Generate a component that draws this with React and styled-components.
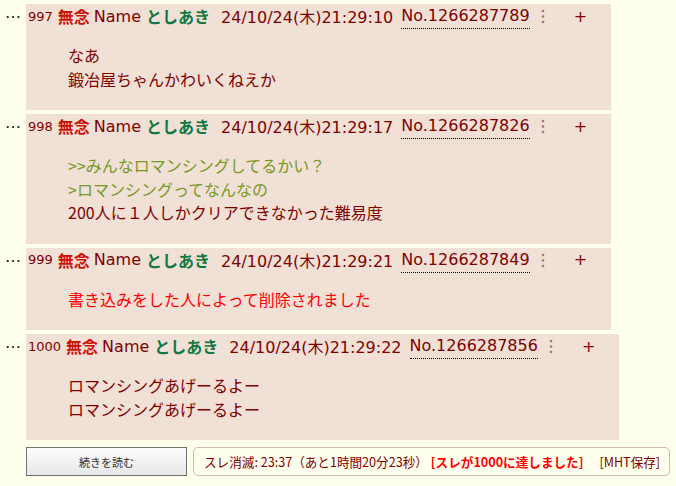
import styled, { createGlobalStyle } from 'styled-components'

const GlobalStyle = createGlobalStyle`
    body {
        margin: 0;
        background: #ffffee;
    }
`

const Page = styled.div`
    display: flex;
    flex-direction: column;
    padding-top: 4px;
    color: #800000;
    font-family: "DejaVu Sans", "Noto Sans CJK JP", sans-serif;
`

const Thread = styled.div`
    display: flex;
    flex-direction: column;
    gap: 4px;
`

const Row = styled.div`
    display: flex;
    align-items: flex-start;
`

const Dots = styled.div`
    width: 26px;
    box-sizing: border-box;
    padding-left: 5px;
    line-height: 24px;
    font-size: 16px;
    font-family: "Noto Sans CJK JP", sans-serif;
    color: #222;
`

const Reply = styled.div`
    background: #f0e0d6;
    padding: 0 24px 3px 2px;
`

const Header = styled.div`
    display: flex;
    align-items: center;
    height: 24px;
    font-size: 16px;
    white-space: nowrap;
`

const ResNo = styled.span`
    font-size: 13px;
    margin-right: 5px;
`

const Subject = styled.span`
    color: #cc1105;
    font-weight: bold;
    margin-right: 4px;
`

const Poster = styled.span`
    color: #117743;
    font-weight: bold;
    margin: 0 11px 0 5px;
`

const PostId = styled.span`
    align-self: flex-start;
    margin: 2px 0 0 8px;
    padding-bottom: 3px;
    line-height: 19px;
    border-bottom: 1px dotted #000;
`

const Menu = styled.svg`
    margin: 0 29px 0 11px;
`

const Del = styled.span`
    font-size: 16px;
    color: #800000;
`

const Body = styled.blockquote`
    margin: 16px 0 16px 40px;
    font-family: "Noto Sans CJK JP", sans-serif;
    font-size: 16px;
    line-height: 23.5px;
`

const tones = { plain: '#800000', quote: '#789922', removed: '#ff0000' }

const Line = styled.div`
    color: ${p => tones[p.$tone || 'plain']};
    white-space: nowrap;
`

const Footer = styled.div`
    display: flex;
    gap: 6px;
    margin-top: 7px;
    padding-left: 26px;
`

const MoreButton = styled.button`
    width: 161px;
    height: 29px;
    border: 1px solid #707070;
    border-radius: 0;
    background: linear-gradient(#fdfdfd, #e7e7e7);
    color: #333;
    font-family: "Noto Sans CJK JP", sans-serif;
    font-size: 11px;
    padding: 0;
`

const Info = styled.div`
    display: flex;
    align-items: center;
    height: 29px;
    box-sizing: border-box;
    padding: 0 9px 0 10px;
    border: 1px solid #d6b8a8;
    border-radius: 5px;
    font-family: "Noto Sans CJK JP", sans-serif;
    font-size: 12.6px;
    color: #800000;
    white-space: nowrap;
`

const Notice = styled.span`
    color: #ff0000;
    font-weight: bold;
    margin-left: 3px;
`

const Save = styled.span`
    margin-left: 16px;
`

const posts = [
    {
        no: '997', time: '24/10/24(木)21:29:10', id: '1266287789',
        lines: [['なあ'], ['鍛冶屋ちゃんかわいくねえか']],
    },
    {
        no: '998', time: '24/10/24(木)21:29:17', id: '1266287826',
        lines: [['>>みんなロマンシングしてるかい？', 'quote'], ['>ロマンシングってなんなの', 'quote'], ['200人に１人しかクリアできなかった難易度']],
    },
    {
        no: '999', time: '24/10/24(木)21:29:21', id: '1266287849',
        lines: [['書き込みをした人によって削除されました', 'removed']],
    },
    {
        no: '1000', time: '24/10/24(木)21:29:22', id: '1266287856',
        lines: [['ロマンシングあげーるよー'], ['ロマンシングあげーるよー']],
    },
]

const MenuIcon = () => (
    <Menu width="4" height="16" viewBox="0 0 4 16">
        <circle cx="2" cy="3" r="1.3" fill="#a8746c" />
        <circle cx="2" cy="8.5" r="1.3" fill="#a8746c" />
        <circle cx="2" cy="14" r="1.3" fill="#a8746c" />
    </Menu>
)

const Post = ({ no, time, id, lines }) => (
    <Row>
        <Dots>…</Dots>
        <Reply>
            <Header>
                <ResNo>{no}</ResNo>
                <Subject>無念</Subject>
                <span>Name</span>
                <Poster>としあき</Poster>
                <span>{time}</span>
                <PostId>No.{id}</PostId>
                <MenuIcon />
                <Del>+</Del>
            </Header>
            <Body>
                {lines.map(([text, tone], i) => (
                    <Line key={i} $tone={tone}>{text}</Line>
                ))}
            </Body>
        </Reply>
    </Row>
)

const App = () => (
    <Page>
        <GlobalStyle />
        <Thread>
            {posts.map(p => <Post key={p.no} {...p} />)}
        </Thread>
        <Footer>
            <MoreButton>続きを読む</MoreButton>
            <Info>
                <span>スレ消滅: 23:37（あと1時間20分23秒）</span>
                <Notice>[スレが1000に達しました]</Notice>
                <Save>[MHT保存]</Save>
            </Info>
        </Footer>
    </Page>
)

export default App
